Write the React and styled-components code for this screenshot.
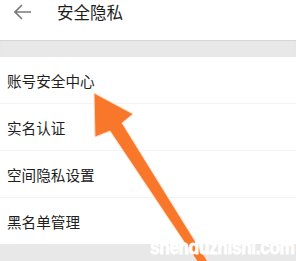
import React from "react";
import styled, { createGlobalStyle } from "styled-components";

const GlobalStyle = createGlobalStyle`
  html, body {
    margin: 0;
    padding: 0;
    background: #ffffff;
  }
  body {
    font-family: "Noto Sans CJK SC", "Noto Sans", sans-serif;
    color: #222;
  }
`;

const Page = styled.div`
  position: relative;
  width: 296px;
  height: 261px;
  overflow: hidden;
  background: #fff;
`;

const Header = styled.div`
  height: 40px;
  display: flex;
  align-items: flex-start;
  padding-left: 14px;
  box-sizing: border-box;
`;

const Back = styled.div`
  width: 18px;
  height: 24px;
  display: flex;
  align-items: center;
`;

const Title = styled.div`
  margin-left: 25px;
  font-size: 16.5px;
  line-height: 24px;
  color: #1e1e1e;
`;

const Band = styled.div`
  height: ${(p) => p.h}px;
  background: #e8e8e8;
  box-shadow: ${(p) => (p.shadow ? "inset 0 1px 1px rgba(0,0,0,0.08)" : "none")};
`;

const List = styled.div`
  display: flex;
  flex-direction: column;
`;

const Row = styled.div`
  height: 46px;
  display: flex;
  align-items: center;
  padding-left: 7px;
  font-size: 14.6px;
  color: #1e1e1e;
  border-bottom: ${(p) => (p.last ? "none" : "1px solid #f3f3f3")};
  box-sizing: content-box;
`;

const Pointer = styled.svg`
  position: absolute;
  left: 0;
  top: 0;
  pointer-events: none;
`;

const Watermark = styled.div`
  position: absolute;
  left: 150px;
  top: 236px;
  font-family: "Liberation Sans", Arial, sans-serif;
  font-weight: bold;
  font-size: 20px;
  line-height: 22px;
  color: #ffffff;
  -webkit-text-stroke: 0.9px #ffffff;
  transform: scaleX(0.86);
  transform-origin: left center;
  letter-spacing: -0.4px;
  white-space: nowrap;
`;

const items = ["账号安全中心", "实名认证", "空间隐私设置", "黑名单管理"];

export default function App() {
  return (
    <>
      <GlobalStyle />
      <Page>
        <Header>
          <Back>
            <svg width="18" height="16" viewBox="0 0 18 16">
              <path
                d="M1 8 H17 M8 1 L1 8 L8 15"
                fill="none"
                stroke="#7a7a7a"
                strokeWidth="1.6"
              />
            </svg>
          </Back>
          <Title>安全隐私</Title>
        </Header>
        <Band h={17} shadow />
        <List>
          {items.map((t, i) => (
            <Row key={t} last={i === items.length - 1}>
              {t}
            </Row>
          ))}
        </List>
        <Band h={20} />
        <Pointer width="296" height="261" viewBox="0 0 296 261">
          <polygon
            points="94,93 133,114 122,123 213,270 203,270 110,131 95,137"
            fill="#f9772b"
            stroke="#ffd9bf"
            strokeWidth="1"
            strokeLinejoin="round"
          />
        </Pointer>
        <Watermark>shenduzhishi.com</Watermark>
      </Page>
    </>
  );
}
